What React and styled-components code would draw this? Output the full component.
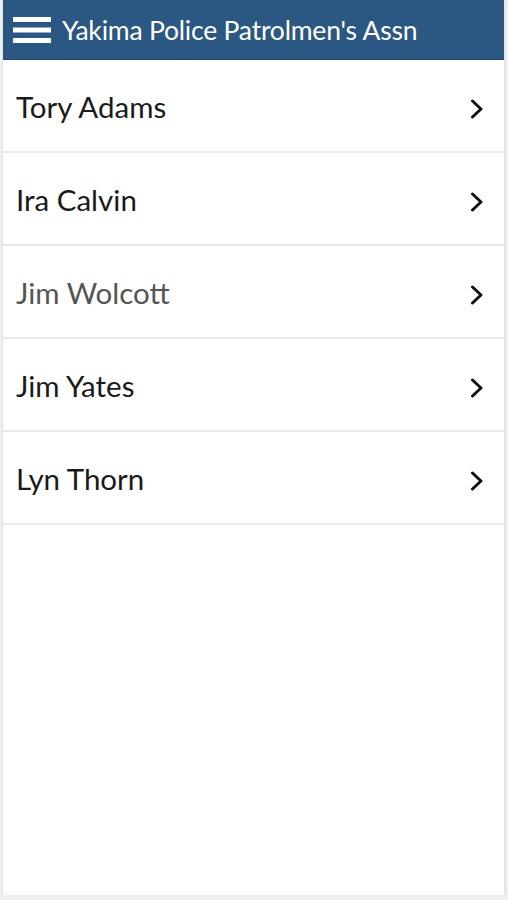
import React from "react"
import styled, { createGlobalStyle } from "styled-components"

const people = [
  { name: "Tory Adams" },
  { name: "Ira Calvin" },
  { name: "Jim Wolcott", muted: true },
  { name: "Jim Yates" },
  { name: "Lyn Thorn" },
]

const GlobalStyle = createGlobalStyle`
  html, body {
    margin: 0;
    padding: 0;
    background: #efefef;
  }
`

const App = () => (
  <>
    <GlobalStyle />
    <Frame>
      <Header>
        <MenuIcon viewBox="0 0 38 26">
          <rect x="0" y="0" width="38" height="5" fill="#fff" />
          <rect x="0" y="10.5" width="38" height="5" fill="#fff" />
          <rect x="0" y="21" width="38" height="5" fill="#fff" />
        </MenuIcon>
        <Title>Yakima Police Patrolmen's Assn</Title>
      </Header>
      <List>
        {people.map((p) => (
          <Row key={p.name}>
            <Name $muted={p.muted}>{p.name}</Name>
            <Chevron viewBox="0 0 14 20">
              <path
                d="M2.5 2 L11 10 L2.5 18"
                fill="none"
                stroke="#111"
                strokeWidth="3"
                strokeLinecap="round"
                strokeLinejoin="round"
              />
            </Chevron>
          </Row>
        ))}
      </List>
    </Frame>
  </>
)

const Frame = styled.div`
  margin: 0 4px 0 2px;
  height: 895px;
  background: #fff;
  border-left: 1px solid #e2e2e2;
  box-shadow: 1px 1px 2px rgba(0, 0, 0, 0.08);
  display: flex;
  flex-direction: column;
`

const Header = styled.div`
  height: 59px;
  background: #2b5882;
  display: flex;
  align-items: center;
  padding: 0 0 0 10px;
  gap: 11px;
  border-bottom: 1px solid #23486c;
`

const MenuIcon = styled.svg`
  width: 38px;
  height: 26px;
  flex-shrink: 0;
`

const Title = styled.div`
  color: #fff;
  font-family: "Lato", "Open Sans", sans-serif;
  font-size: 26.5px;
  letter-spacing: -0.2px;
  white-space: nowrap;
`

const List = styled.div`
  display: flex;
  flex-direction: column;
`

const Row = styled.div`
  height: 91px;
  border-bottom: 2px solid #e8e8e8;
  display: flex;
  align-items: center;
  justify-content: space-between;
  padding: 0 20px 0 13px;
`

const Name = styled.div`
  font-family: "Lato", "Open Sans", sans-serif;
  font-size: 29.5px;
  color: ${(p) => (p.$muted ? "#555" : "#1a1a1a")};
  margin-top: 1px;
`

const Chevron = styled.svg`
  width: 14px;
  height: 20px;
  flex-shrink: 0;
  margin-top: 6px;
`

export default App
